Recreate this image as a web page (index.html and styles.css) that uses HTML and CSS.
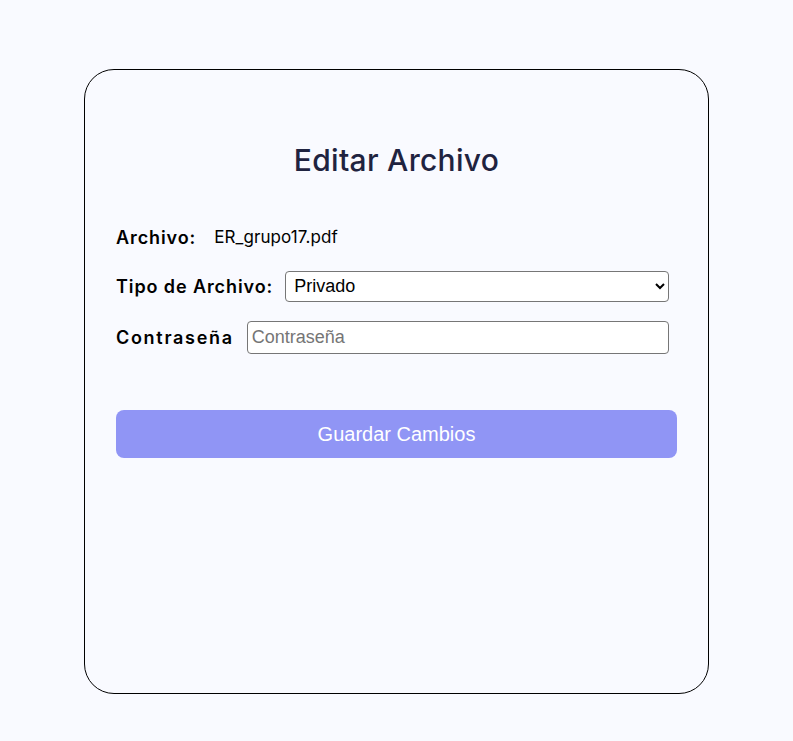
FILE: index.html
```html
<!DOCTYPE html>
<html lang="es">
<head>
<meta charset="utf-8">
<title>Editar Archivo</title>
<link rel="stylesheet" href="styles.css">
</head>
<body>
<div class="card">
  <h1 class="title">Editar Archivo</h1>
  <form class="form">
    <div class="row row-file">
      <span class="label">Archivo:</span>
      <span class="value">ER_grupo17.pdf</span>
    </div>
    <div class="row row-type">
      <label class="label" for="tipo">Tipo de Archivo:</label>
      <select id="tipo" class="field">
        <option>Privado</option>
        <option>Público</option>
      </select>
    </div>
    <div class="row row-pass">
      <label class="label label-wide" for="pass">Contraseña</label>
      <input id="pass" class="field" type="password" placeholder="Contraseña">
    </div>
    <button type="button" class="btn">Guardar Cambios</button>
  </form>
</div>
</body>
</html>
```

FILE: styles.css
```css
* { box-sizing: border-box; }
body {
  margin: 0;
  background: #f9faff;
  font-family: Inter, "Noto Sans", sans-serif;
}
.card {
  width: 625px;
  height: 625px;
  margin: 69px auto 0;
  border: 1px solid #000;
  border-radius: 30px;
  padding: 67px 31px 0;
}
.title {
  margin: 0 0 38px;
  text-align: center;
  font-size: 30px;
  font-weight: 500;
  letter-spacing: 0.3px;
  line-height: 46px;
  color: #1f2340;
}
.form {
  display: flex;
  flex-direction: column;
}
.row {
  display: flex;
  align-items: center;
  gap: 12px;
  margin-right: 8px;
  margin-bottom: 18px;
  min-height: 32px;
}
.row-file { margin-bottom: 17px; }
.row-type { margin-bottom: 19px; }
.row-pass { gap: 13px; min-height: 33px; }
.label {
  font-size: 18px;
  font-weight: 600;
  letter-spacing: 0.9px;
  color: #000;
}
.label-wide { letter-spacing: 1.7px; }
.value {
  margin-left: 6px;
  font-size: 17px;
  letter-spacing: 0.1px;
  color: #000;
}
.field {
  flex: 1;
  height: 33px;
  border: 1px solid #767676;
  border-radius: 4px;
  background: #fff;
  font-family: "Liberation Sans", Arial, sans-serif;
  font-size: 18px;
  color: #000;
  padding: 2px 4px;
}
select.field { height: 31px; padding: 0 4px; }
.field::placeholder { color: #757575; }
.btn {
  margin-top: 38px;
  height: 48px;
  border: none;
  border-radius: 8px;
  background: #9095f5;
  color: #fff;
  font-family: "Liberation Sans", Arial, sans-serif;
  font-size: 20px;
}
```
